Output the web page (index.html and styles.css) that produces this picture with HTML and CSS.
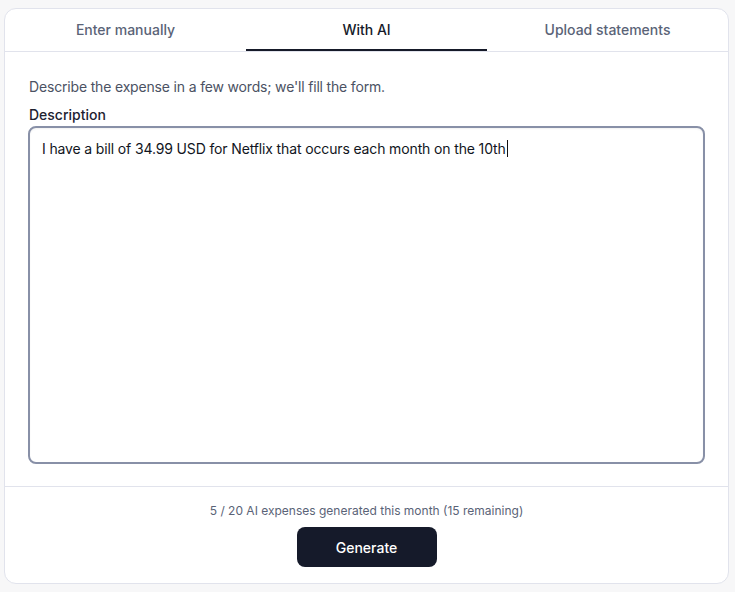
FILE: index.html
```html
<!DOCTYPE html>
<html lang="en">
<head>
<meta charset="utf-8">
<title>Add expense</title>
<link rel="stylesheet" href="styles.css">
</head>
<body>
<div class="card">
  <nav class="tabs">
    <div class="tab">Enter manually</div>
    <div class="tab active">With AI</div>
    <div class="tab">Upload statements</div>
  </nav>
  <section class="content">
    <p class="hint">Describe the expense in a few words; we'll fill the form.</p>
    <label class="label">Description</label>
    <div class="textarea" role="textbox">I have a bill of 34.99 USD for Netflix that occurs each month on the 10th<span class="caret"></span></div>
  </section>
  <footer class="footer">
    <p class="quota">5 / 20 AI expenses generated this month (15 remaining)</p>
    <button class="btn">Generate</button>
  </footer>
</div>
</body>
</html>
```

FILE: styles.css
```css
* { box-sizing: border-box; }
html, body { margin: 0; padding: 0; }
body {
  background: #f7f7f8;
  font-family: Inter, "Noto Sans", sans-serif;
  padding: 8px 6px 8px 4px;
  height: 592px;
}
.card {
  width: 725px;
  height: 576px;
  background: #fff;
  border: 1px solid #e1e3ec;
  border-radius: 12px;
  display: flex;
  flex-direction: column;
  overflow: hidden;
}
.tabs {
  display: grid;
  grid-template-columns: 1fr 1fr 1fr;
  border-bottom: 1px solid #e1e3ec;
  height: 43px;
}
.tab {
  display: flex;
  align-items: center;
  justify-content: center;
  font-size: 14px;
  color: #5a6377;
  padding-top: 1px;
  border-bottom: 2px solid transparent;
  font-weight: 500;
}
.tab.active {
  color: #161a29;
  border-bottom-color: #161a29;
}
.content {
  flex: 1;
  padding: 25px 23px 22px 24px;
  display: flex;
  flex-direction: column;
}
.hint {
  margin: 0 0 8px 0;
  font-size: 14px;
  line-height: 20px;
  color: #4b5263;
  letter-spacing: -0.17px;
}
.label {
  font-size: 14px;
  line-height: 20px;
  color: #1d2230;
  font-weight: 500;
  margin-bottom: 1px;
}
.textarea {
  flex: 1;
  margin-left: -1px;
  border: 2px solid #8890a7;
  border-radius: 8px;
  padding: 11px 12px;
  font-size: 14px;
  line-height: 20px;
  color: #111522;
  letter-spacing: -0.14px;
  box-shadow: inset 0 1px 2px rgba(0,0,0,0.06);
}
.caret {
  display: inline-block;
  width: 1px;
  height: 17px;
  background: #111;
  vertical-align: -3px;
  margin-left: 1px;
}
.footer {
  border-top: 1px solid #e1e3ec;
  padding: 16px 0 16px 0;
  display: flex;
  flex-direction: column;
  align-items: center;
}
.quota {
  margin: 0 0 8px 0;
  font-size: 12px;
  line-height: 16px;
  color: #5a6377;
}
.btn {
  width: 140px;
  height: 40px;
  border: none;
  border-radius: 8px;
  background: #151a2a;
  color: #fff;
  font-family: Inter, "Noto Sans", sans-serif;
  font-size: 14px;
  font-weight: 500;
}
```
